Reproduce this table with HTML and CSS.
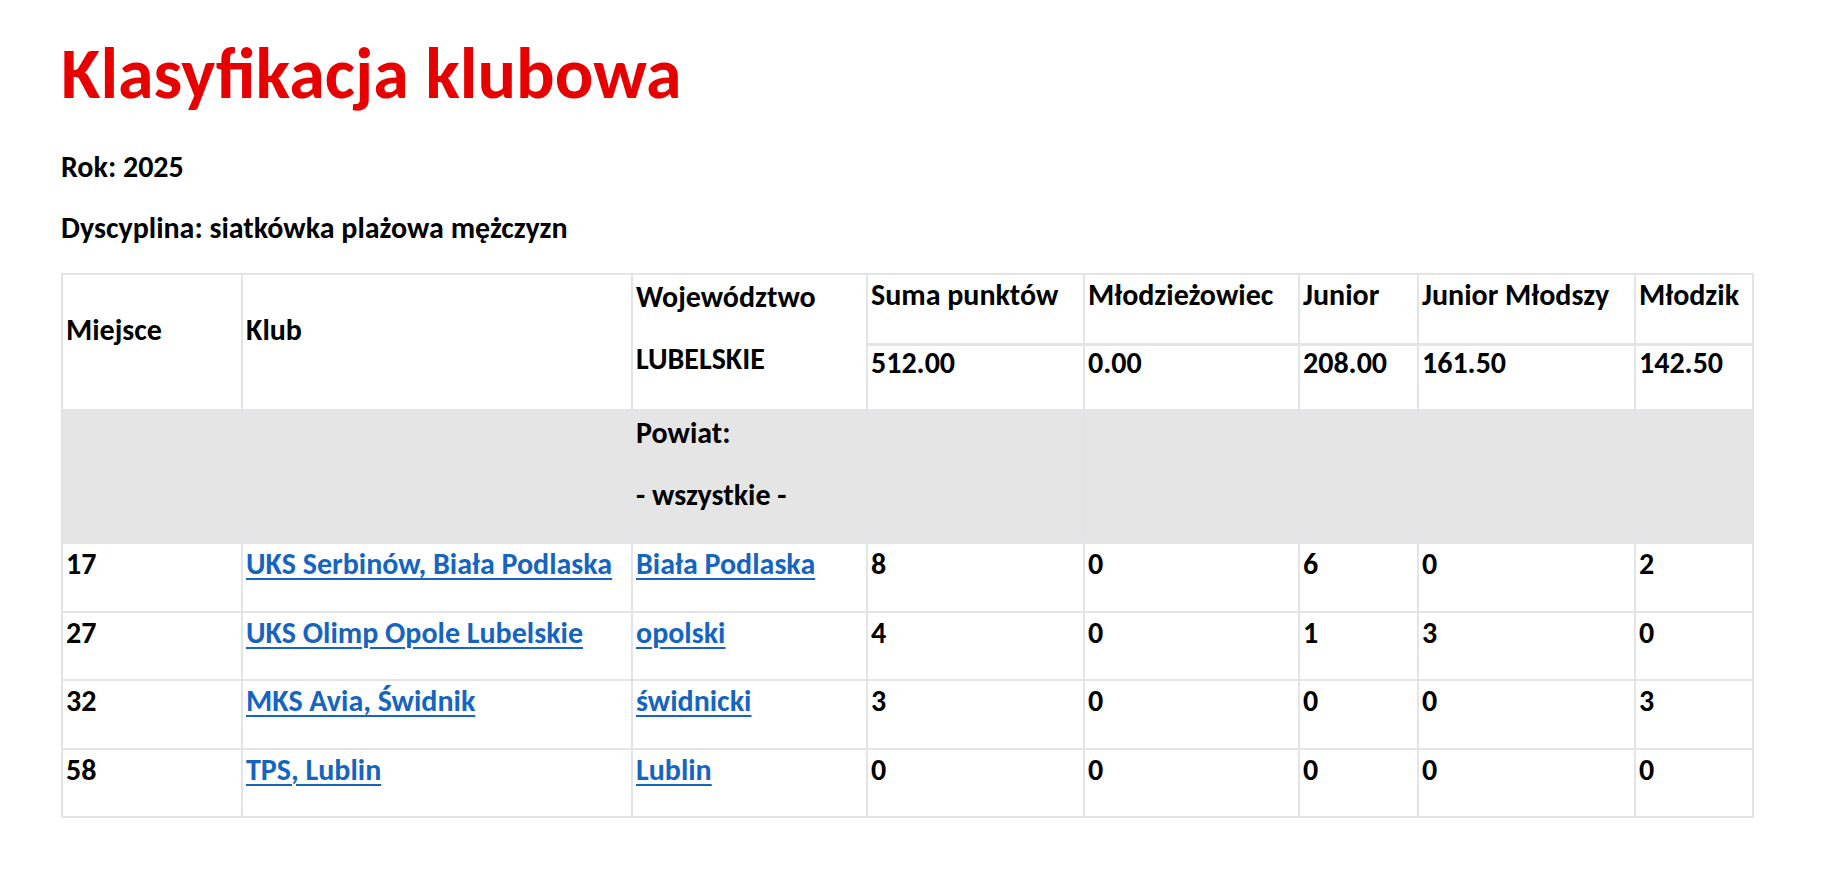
FILE: index.html
```html
<!DOCTYPE html>
<html lang="pl">
<head>
<meta charset="utf-8">
<title>Klasyfikacja klubowa</title>
<link rel="stylesheet" href="styles.css">
</head>
<body>
<div class="page">
  <h1 class="title">Klasyfikacja klubowa</h1>
  <p class="meta">Rok: 2025</p>
  <p class="meta meta-last">Dyscyplina: siatkówka plażowa mężczyzn</p>
  <table class="ranking">
    <colgroup>
      <col class="c-place">
      <col class="c-club">
      <col class="c-region">
      <col class="c-sum">
      <col class="c-mlodz">
      <col class="c-jun">
      <col class="c-junm">
      <col class="c-mlodzik">
    </colgroup>
    <tr class="head-1">
      <td class="head-mid" rowspan="2">Miejsce</td>
      <td class="head-mid" rowspan="2">Klub</td>
      <td class="stack" rowspan="2">Województwo<p>LUBELSKIE</p></td>
      <td class="head-top">Suma punktów</td>
      <td class="head-top">Młodzieżowiec</td>
      <td class="head-top">Junior</td>
      <td class="head-top">Junior Młodszy</td>
      <td class="head-top">Młodzik</td>
    </tr>
    <tr class="head-2">
      <td class="head-val">512.00</td>
      <td class="head-val">0.00</td>
      <td class="head-val">208.00</td>
      <td class="head-val">161.50</td>
      <td class="head-val">142.50</td>
    </tr>
    <tr class="filter">
      <td></td>
      <td></td>
      <td class="stack">Powiat:<p>- wszystkie -</p></td>
      <td></td>
      <td></td>
      <td></td>
      <td></td>
      <td></td>
    </tr>
    <tr class="row">
      <td>17</td>
      <td><a href="#">UKS Serbinów, Biała Podlaska</a></td>
      <td><a href="#">Biała Podlaska</a></td>
      <td>8</td><td>0</td><td>6</td><td>0</td><td>2</td>
    </tr>
    <tr class="row">
      <td>27</td>
      <td><a href="#">UKS Olimp Opole Lubelskie</a></td>
      <td><a href="#">opolski</a></td>
      <td>4</td><td>0</td><td>1</td><td>3</td><td>0</td>
    </tr>
    <tr class="row">
      <td>32</td>
      <td><a href="#">MKS Avia, Świdnik</a></td>
      <td><a href="#">świdnicki</a></td>
      <td>3</td><td>0</td><td>0</td><td>0</td><td>3</td>
    </tr>
    <tr class="row">
      <td>58</td>
      <td><a href="#">TPS, Lublin</a></td>
      <td><a href="#">Lublin</a></td>
      <td>0</td><td>0</td><td>0</td><td>0</td><td>0</td>
    </tr>
  </table>
</div>
</body>
</html>
```

FILE: styles.css
```css
html, body {
  margin: 0;
  padding: 0;
  background: #ffffff;
}

body {
  font-family: Carlito, Calibri, Lato, "Liberation Sans", sans-serif;
  font-weight: 700;
  font-size: 30px;
  line-height: 34px;
  color: #000000;
}

.page {
  padding: 29px 61px 40px 61px;
}

.title {
  margin: 0 0 33px 0;
  font-size: 72px;
  line-height: 88px;
  font-weight: 700;
  color: #e60000;
}

.meta {
  margin: 0 0 27px 0;
}

.meta-last {
  margin-bottom: 28px;
}

.ranking {
  border-collapse: collapse;
  table-layout: fixed;
  width: 1693px;
  border: 2px solid #e2e4e8;
}

.c-place { width: 180px; }
.c-club { width: 390px; }
.c-region { width: 235px; }
.c-sum { width: 217px; }
.c-mlodz { width: 215px; }
.c-jun { width: 119px; }
.c-junm { width: 217px; }
.c-mlodzik { width: 118px; }

.ranking td {
  border: 2px solid #e2e4e8;
  padding: 3px 2px 0 3px;
  vertical-align: top;
  white-space: nowrap;
}

.ranking td p {
  margin: 28px 0 28px 0;
}

.head-1 { height: 70px; }
.head-2 { height: 66px; }

.ranking .stack {
  padding-top: 5px;
  padding-bottom: 5px;
}

.ranking .head-mid {
  vertical-align: middle;
  padding-top: 5px;
  padding-bottom: 29px;
}

.ranking .head-top {
  padding-top: 3px;
  border-bottom: 3px solid #e2e4e8;
}

.ranking .head-val {
  padding-top: 0;
}

.filter td {
  background: #e5e5e5;
}

.ranking .filter .stack {
  padding-bottom: 2px;
}

.row {
  height: 68.5px;
}

.ranking a {
  color: #1565c0;
  text-decoration: underline;
  text-underline-offset: 4px;
  text-decoration-thickness: 2px;
}
```
